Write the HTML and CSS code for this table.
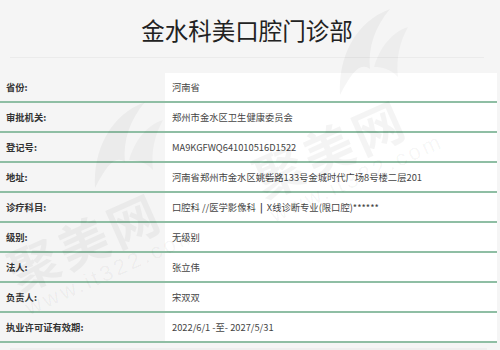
FILE: index.html
```html
<!DOCTYPE html>
<html lang="zh">
<head>
<meta charset="utf-8">
<title>金水科美口腔门诊部</title>
<link rel="stylesheet" href="styles.css">
</head>
<body>
<div class="page">
  <h1 class="title">金水科美口腔门诊部</h1>
  <div class="info">
    <div class="row"><div class="label">省份:</div><div class="value">河南省</div></div>
    <div class="row"><div class="label">审批机关:</div><div class="value">郑州市金水区卫生健康委员会</div></div>
    <div class="row"><div class="label">登记号:</div><div class="value">MA9KGFWQ641010516D1522</div></div>
    <div class="row"><div class="label">地址:</div><div class="value">河南省郑州市金水区姚砦路133号金城时代广场8号楼二层201</div></div>
    <div class="row"><div class="label">诊疗科目:</div><div class="value">口腔科 //医学影像科 &nbsp;<b class="sep">|</b>&nbsp; X线诊断专业(限口腔)******</div></div>
    <div class="row"><div class="label">级别:</div><div class="value">无级别</div></div>
    <div class="row"><div class="label">法人:</div><div class="value">张立伟</div></div>
    <div class="row"><div class="label">负责人:</div><div class="value">宋双双</div></div>
    <div class="row"><div class="label">执业许可证有效期:</div><div class="value">2022/6/1 -至- 2027/5/31</div></div>
  </div>
  <div class="next"></div>

  <div class="watermark wm-a">
    <svg class="wm-logo" width="80" height="90" viewBox="0 0 80 90">
      <path d="M10 88 C 8 50, 25 15, 60 2 C 45 20, 38 40, 40 62 C 30 55, 22 65, 10 88 Z" fill="rgba(0,0,0,0.04)"/>
      <path d="M44 60 C 50 40, 62 25, 78 20 C 70 35, 66 50, 68 70 C 60 62, 52 60, 44 60 Z" fill="rgba(0,0,0,0.03)"/>
    </svg>
    <div class="wm-text">
      <div class="wm-big">聚美网</div>
      <div class="wm-url">www.it322.com</div>
    </div>
  </div>
  <div class="watermark wm-b">
    <svg class="wm-logo" width="80" height="90" viewBox="0 0 80 90">
      <path d="M10 88 C 8 50, 25 15, 60 2 C 45 20, 38 40, 40 62 C 30 55, 22 65, 10 88 Z" fill="rgba(0,0,0,0.04)"/>
      <path d="M44 60 C 50 40, 62 25, 78 20 C 70 35, 66 50, 68 70 C 60 62, 52 60, 44 60 Z" fill="rgba(0,0,0,0.03)"/>
    </svg>
    <div class="wm-text">
      <div class="wm-big">聚美网</div>
      <div class="wm-url">www.it322.com</div>
    </div>
  </div>
</div>
</body>
</html>
```

FILE: styles.css
```css
html, body {
  margin: 0;
  padding: 0;
  background: #f5f5f5;
}

body {
  font-family: "Noto Sans CJK SC", "Noto Sans", sans-serif;
  color: #333;
}

.page {
  position: relative;
  width: 497px;
  height: 350px;
  overflow: hidden;
}

.title {
  margin: 0 13px 15px 10px;
  height: 54px;
  padding-top: 3px;
  border-bottom: 1px solid #ebebeb;
  display: flex;
  align-items: center;
  justify-content: center;
  font-size: 23.5px;
  font-weight: normal;
  color: #222;
}

.info {
  display: flex;
  flex-direction: column;
}

.row {
  display: grid;
  grid-template-columns: 165px 1fr;
  height: 28px;
  border-bottom: 2px solid #8fbea4;
  font-size: 9.3px;
}

.label {
  display: flex;
  align-items: center;
  padding-left: 6px;
  font-weight: bold;
  color: #333;
  background: #f5f5f5;
}

.value {
  display: flex;
  align-items: center;
  padding-left: 7px;
  color: #444;
  background: #fff;
  white-space: pre;
}

.sep {
  color: #333;
}

.next {
  margin: 5px 10px 0 10px;
  width: 477px;
  height: 10px;
  background: #eeeeee;
}

.watermark {
  position: absolute;
  pointer-events: none;
  width: 260px;
  height: 350px;
}

.wm-a { left: 0; top: 0; }
.wm-b { left: 245px; top: -93px; }

.wm-logo {
  position: absolute;
  left: 85px;
  top: 100px;
}

.wm-text {
  position: absolute;
  left: 32px;
  top: 242px;
  transform: rotate(-24deg);
  transform-origin: 0 100%;
}

.wm-big {
  font-size: 50px;
  line-height: 52px;
  font-weight: bold;
  color: rgba(0, 0, 0, 0.045);
  letter-spacing: 4px;
  white-space: nowrap;
}

.wm-url {
  font-family: "Liberation Sans", sans-serif;
  font-size: 22px;
  line-height: 28px;
  color: rgba(0, 0, 0, 0.045);
  letter-spacing: 3px;
  white-space: nowrap;
}
```
